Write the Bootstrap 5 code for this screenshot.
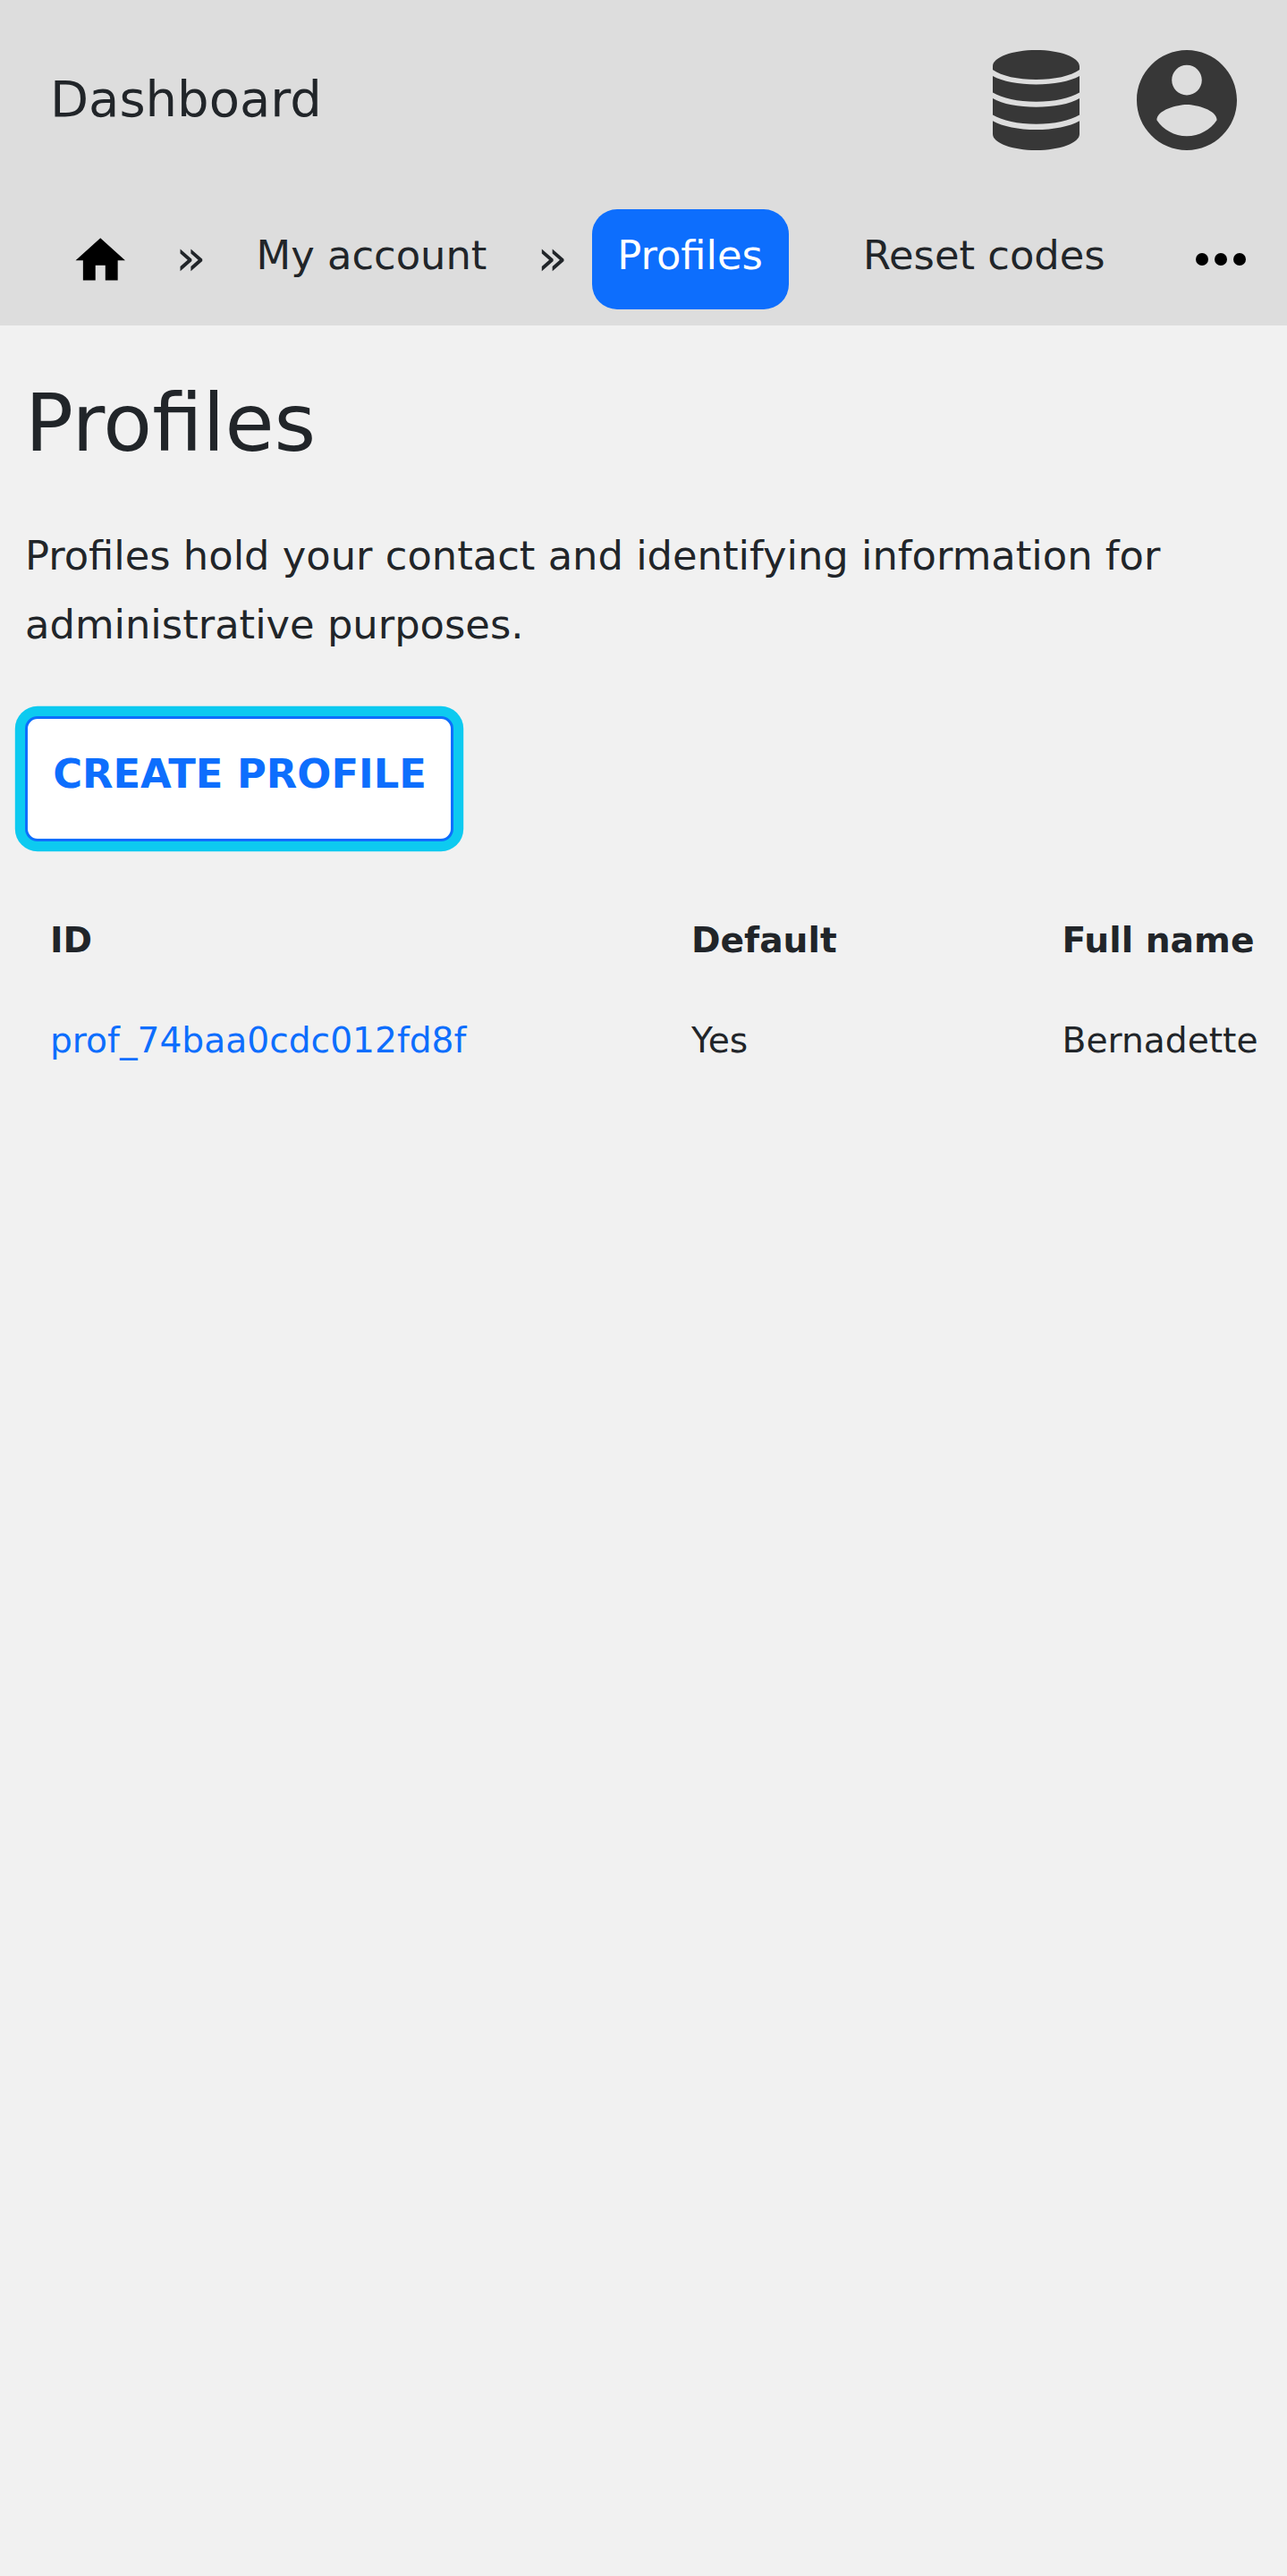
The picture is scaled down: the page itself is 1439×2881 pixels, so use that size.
<!DOCTYPE html>
<html lang="en">
<head>
<meta charset="utf-8">
<meta name="viewport" content="width=device-width, initial-scale=1">
<title>Profiles</title>
<link href="https://cdn.jsdelivr.net/npm/bootstrap@5.3.0/dist/css/bootstrap.min.css" rel="stylesheet">
<style>
  body { font-family: "DejaVu Sans", sans-serif; font-size: 44.8px; line-height: 77px; color: #212529; background: #f1f1f1; min-height: 2881px; overflow-x: hidden; }
  .site-header { background: #ddd; height: 364px; }
  .title-bar { height: 224px; padding: 0 56px; }
  .site-title { font-size: 56px; padding-bottom: 4px; }
  .header-icons { gap: 64.5px; color: #373737; }
  .header-icons svg, .crumb-bar svg { display: block; fill: currentColor; }
  .crumb-bar { height: 140px; padding: 10.2px 32px 0 78.8px; white-space: nowrap; }
  .crumb-bar a { color: inherit; text-decoration: none; }
  .crumb-bar .home-link, .crumb-bar .more-link { color: #000; }
  .home-link { padding-top: 24px; margin-right: 51px; }
  .more-link { padding-top: 14px; }
  .crumb-sep { font-size: 56px; line-height: 107px; }
  .crumb-item { height: 112px; padding: 12.5px 28px 0; border-radius: 28px; margin: 0 28px; }
  .crumb-bar .crumb-current { background: #0d6efd; color: #fff; padding-left: 28.6px; padding-right: 29px; margin-left: 27px; margin-right: 27px; }
  .page-body { padding: 55px 28px 0; }
  .page-title { font-size: 89.6px; line-height: 108px; margin: 0 0 56px; }
  .create-row { padding-top: 64px; }
  .create-btn { --bs-btn-font-size: 44.8px; --bs-btn-line-height: 77px; --bs-btn-font-weight: 700; --bs-btn-color: #0d6efd; --bs-btn-bg: #fff; --bs-btn-border-color: #0d6efd; --bs-btn-border-width: 3.5px; --bs-btn-border-radius: 14px; width: 479px; height: 140px; padding: 23px 0 0 1px; text-transform: uppercase; box-shadow: 0 0 0 11.2px #0dcaf0; }
  .profile-table { font-size: 39.2px; line-height: 56px; width: 1383px; table-layout: fixed; margin: 54.5px 0 0; --bs-table-bg: transparent; --bs-table-color: #212529; }
  .profile-table > :not(caption) > * > * { padding: 28px; white-space: nowrap; }
  .profile-table a { text-decoration: none; color: #0d6efd; }
  .col-id { width: 717px; }
  .col-default { width: 414.5px; }
</style>
</head>
<body>
<header class="site-header">
  <div class="title-bar d-flex align-items-center justify-content-between">
    <span class="site-title">Dashboard</span>
    <div class="header-icons d-flex align-items-center">
      <svg width="97" height="112" viewBox="0 0 97 112" aria-label="Data"><path d="M0 18C0 8 22 0 48.500 0S97 8 97 18V22C87 29 69 33 48.500 33S10 29 0 22ZM0 29C11 35 29 38.500 48.500 38.500S86 35 97 29V47.500C86 54 69 57.700 48.500 57.700S11 54 0 47.500ZM0 54C11 60.500 29 63.700 48.500 63.700S86 60.500 97 54V72.500C86 79 69 82.700 48.500 82.700S11 79 0 72.500ZM0 79.200C11 85.500 29 89 48.500 89S86 85.500 97 79.200V94C97 104 75 112 48.500 112S0 104 0 94Z"/></svg>
      <svg width="112" height="112" viewBox="2 2 20 20" aria-label="Account"><path d="M12 2C6.480 2 2 6.480 2 12s4.480 10 10 10 10-4.480 10-10S17.520 2 12 2zm0 3c1.660 0 3 1.340 3 3s-1.340 3-3 3-3-1.340-3-3 1.340-3 3-3zm0 14.200c-2.500 0-4.710-1.280-6-3.220.03-1.990 4-3.080 6-3.080 1.990 0 5.970 1.090 6 3.080-1.290 1.940-3.500 3.220-6 3.220z"/></svg>
    </div>
  </div>
  <nav class="crumb-bar d-flex align-items-start" aria-label="Breadcrumb">
    <a class="home-link" href="#"><svg width="66.500" height="66.500" viewBox="0 0 24 24"><path d="M10 20v-6h4v6h5v-8h3L12 3 2 12h3v8z"/></svg></a>
    <span class="crumb-sep">»</span>
    <a class="crumb-item" href="#">My account</a>
    <span class="crumb-sep">»</span>
    <a class="crumb-item crumb-current" href="#" aria-current="page">Profiles</a>
    <a class="crumb-item" href="#">Reset codes</a>
    <a class="more-link ms-auto" href="#"><svg width="84" height="84" viewBox="0 0 24 24"><circle cx="6" cy="12" r="2"/><circle cx="12" cy="12" r="2"/><circle cx="18" cy="12" r="2"/></svg></a>
  </nav>
</header>
<main class="page-body">
  <h1 class="page-title fw-normal">Profiles</h1>
  <p class="mb-0">Profiles hold your contact and identifying information for administrative purposes.</p>
  <div class="create-row d-flex"><a class="btn create-btn" href="#">Create profile</a></div>
  <table class="table table-borderless profile-table">
    <colgroup><col class="col-id"><col class="col-default"><col></colgroup>
    <thead><tr><th>ID</th><th>Default</th><th>Full name</th></tr></thead>
    <tbody><tr><td><a href="#">prof_74baa0cdc012fd8f</a></td><td>Yes</td><td>Bernadette</td></tr></tbody>
  </table>
</main>
<script src="https://cdn.jsdelivr.net/npm/bootstrap@5.3.0/dist/js/bootstrap.bundle.min.js"></script>
</body>
</html>
